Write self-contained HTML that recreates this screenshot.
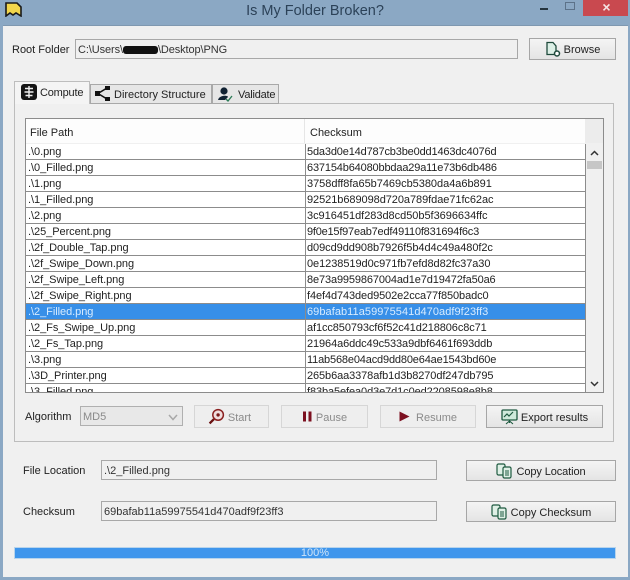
<!DOCTYPE html>
<html><head><meta charset="utf-8"><style>
html,body{margin:0;padding:0;width:630px;height:580px;overflow:hidden;background:#8ba8c4}
*{box-sizing:border-box}
body{font-family:"Liberation Sans",sans-serif;font-size:11px;color:#222;position:relative}
#w{position:absolute;left:0;top:0;width:630px;height:580px;filter:blur(0.3px)}
.a{position:absolute}
.t{position:absolute;white-space:nowrap;line-height:14px;transform:translateY(1px)}
.in{position:absolute;background:#f0f0f0;border:1px solid #a8a8a8;line-height:20px;padding-left:2px;white-space:nowrap;color:#333}
.btn{position:absolute;border:1px solid #a6a6a6;background:linear-gradient(#f4f4f4,#e4e4e4);text-align:center;white-space:nowrap;display:flex;align-items:center;justify-content:center;gap:3px;color:#222}
.btn span{position:relative;top:1px}
.dis{border-color:#d6d6d6;background:#eeeeee;color:#8a8a8a}
.row{position:absolute;left:26px;width:559px;height:16px;border-bottom:1px solid #8c8c8c;background:#fff;line-height:15px;white-space:nowrap;color:#222}
.row span{position:absolute;top:1px}
.row .p{left:2px;letter-spacing:-0.05px}
.row .c{left:281px}
.sel{background:#378fe8;color:#d8ecff}
svg{display:block;flex:none}
</style></head><body><div id="w">
<div class="a" style="left:3px;top:25px;width:625px;height:552px;background:#f0f0f0;border-top:1px solid #7f98b0"></div>

<svg class="a" style="left:5px;top:2px" width="17" height="15" viewBox="0 0 17 15"><path d="M1 1H12L16 5V14L11 11L8 13L5 11L1 14Z" fill="#f2d64b" stroke="#1a1a1a" stroke-width="1.6"/></svg>
<div class="t" style="left:0;width:630px;top:1px;text-align:center;font-size:14.5px;line-height:18px;color:#2c4258">Is My Folder Broken?</div>
<div class="a" style="left:540px;top:8px;width:8px;height:2px;background:#24343f"></div>
<div class="a" style="left:565px;top:2px;width:10px;height:8px;border:1px solid #5c7289"></div>
<div class="a" style="left:583px;top:0;width:45px;height:16px;background:#c9494f"></div>
<div class="t" style="left:584px;width:45px;top:-1px;text-align:center;font-size:14px;line-height:15px;color:#f5e4e4;font-weight:bold">×</div>

<div class="t" style="left:12px;top:42px">Root Folder</div>
<div class="in" style="left:75px;top:39px;width:443px;height:20px;letter-spacing:-0.1px">C:\Users\<span style="display:inline-block;width:35px;height:8px;background:#111;border-radius:3px;vertical-align:-1px"></span>\Desktop\PNG</div>
<div class="btn" style="left:529px;top:38px;width:87px;height:22px"><svg width="16" height="16" viewBox="0 0 16 16"><path d="M2 1.5H8L11 5V13.5H2Z" fill="#dcefe6" stroke="#1f4a3c" stroke-width="1.3"/><circle cx="12" cy="12.5" r="2.5" fill="#fff" stroke="#1f4a3c" stroke-width="1.5"/></svg><span>Browse</span></div>

<!-- tabs -->
<div class="a" style="left:14px;top:103px;width:600px;height:339px;border:1px solid #bdbdbd;background:#f0f0f0"></div>
<div class="a" style="left:90px;top:84px;width:122px;height:20px;border:1px solid #a8a8a8;background:#e6e6e6"></div>
<div class="a" style="left:212px;top:84px;width:67px;height:20px;border:1px solid #a8a8a8;background:#e6e6e6"></div>
<div class="a" style="left:14px;top:81px;width:76px;height:23px;border:1px solid #bdbdbd;border-bottom:0;background:#f4f4f4"></div>
<svg class="a" style="left:21px;top:84px" width="16" height="16" viewBox="0 0 16 16"><rect width="16" height="16" rx="3" fill="#141414"/><path d="M8 2V14M4 4.5H12M3.5 8H12.5M4.5 11.5H11.5" stroke="#eee" stroke-width="1.4"/></svg>
<div class="t" style="left:40px;top:85px;letter-spacing:-0.2px">Compute</div>
<svg class="a" style="left:94px;top:86px" width="17" height="15" viewBox="0 0 17 15"><path d="M4 7.5L13 2M4 7.5L13 13" stroke="#111" stroke-width="1.6"/><rect x="1" y="5" width="5" height="5" fill="#111"/><rect x="11" y="0" width="5" height="4" fill="#111"/><rect x="11" y="11" width="5" height="4" fill="#111"/></svg>
<div class="t" style="left:114px;top:87px">Directory Structure</div>
<svg class="a" style="left:217px;top:86px" width="17" height="16" viewBox="0 0 17 16"><circle cx="7" cy="5" r="3.6" fill="#123"/><path d="M1 14C2 9 11 9 11 11L8 14Z" fill="#123"/><path d="M9 13L11 15L15 10" fill="none" stroke="#2a7a55" stroke-width="1.3"/></svg>
<div class="t" style="left:238px;top:87px;letter-spacing:-0.2px">Validate</div>

<!-- table -->
<div class="a" style="left:25px;top:118px;width:579px;height:275px;border:1px solid #8c8c8c;background:#f0f0f0"></div>
<div class="a" style="left:26px;top:119px;width:559px;height:24px;background:#fdfdfd"></div>
<div class="a" style="left:585px;top:119px;width:18px;height:24px;background:#ececec"></div>
<div class="a" style="left:304px;top:119px;width:1px;height:24px;background:#e6e6e6"></div>
<div class="t" style="left:30px;top:125px">File Path</div>
<div class="t" style="left:310px;top:125px">Checksum</div>

<div class="row" style="top:144px"><span class="p">.\0.png</span><span class="c" style="letter-spacing:-0.16px">5da3d0e14d787cb3be0dd1463dc4076d</span></div>
<div class="row" style="top:160px"><span class="p">.\0_Filled.png</span><span class="c" style="letter-spacing:-0.16px">637154b64080bbdaa29a11e73b6db486</span></div>
<div class="row" style="top:176px"><span class="p">.\1.png</span><span class="c" style="letter-spacing:-0.03px">3758dff8fa65b7469cb5380da4a6b891</span></div>
<div class="row" style="top:192px"><span class="p">.\1_Filled.png</span><span class="c" style="letter-spacing:-0.06px">92521b689098d720a789fdae71fc62ac</span></div>
<div class="row" style="top:208px"><span class="p">.\2.png</span><span class="c" style="letter-spacing:-0.03px">3c916451df283d8cd50b5f3696634ffc</span></div>
<div class="row" style="top:224px"><span class="p">.\25_Percent.png</span><span class="c" style="letter-spacing:-0.22px">9f0e15f97eab7edf49110f831694f6c3</span></div>
<div class="row" style="top:240px"><span class="p">.\2f_Double_Tap.png</span><span class="c" style="letter-spacing:-0.06px">d09cd9dd908b7926f5b4d4c49a480f2c</span></div>
<div class="row" style="top:256px"><span class="p">.\2f_Swipe_Down.png</span><span class="c" style="letter-spacing:-0.06px">0e1238519d0c971fb7efd8d82fc37a30</span></div>
<div class="row" style="top:272px"><span class="p">.\2f_Swipe_Left.png</span><span class="c" style="letter-spacing:-0.13px">8e73a9959867004ad1e7d19472fa50a6</span></div>
<div class="row" style="top:288px"><span class="p">.\2f_Swipe_Right.png</span><span class="c" style="letter-spacing:-0.1px">f4ef4d743ded9502e2cca77f850badc0</span></div>
<div class="row sel" style="top:304px"><span class="p">.\2_Filled.png</span><span class="c" style="letter-spacing:0.06px">69bafab11a59975541d470adf9f23ff3</span></div>
<div class="row" style="top:320px"><span class="p">.\2_Fs_Swipe_Up.png</span><span class="c" style="letter-spacing:-0.1px">af1cc850793cf6f52c41d218806c8c71</span></div>
<div class="row" style="top:336px"><span class="p">.\2_Fs_Tap.png</span><span class="c" style="letter-spacing:-0.1px">21964a6ddc49c533a9dbf6461f693ddb</span></div>
<div class="row" style="top:352px"><span class="p">.\3.png</span><span class="c" style="letter-spacing:-0.16px">11ab568e04acd9dd80e64ae1543bd60e</span></div>
<div class="row" style="top:368px"><span class="p">.\3D_Printer.png</span><span class="c" style="letter-spacing:-0.1px">265b6aa3378afb1d3b8270df247db795</span></div>
<div class="row" style="top:384px;height:8px;overflow:hidden;border-bottom:0"><span class="p">.\3_Filled.png</span><span class="c" style="letter-spacing:-0.1px">f83ba5efea0d3e7d1c0ed2208598e8b8</span></div>
<div class="a" style="left:305px;top:144px;width:1px;height:248px;background:#8c8c8c"></div>
<div class="a" style="left:585px;top:144px;width:1px;height:248px;background:#8c8c8c"></div>
<div class="a" style="left:586px;top:144px;width:17px;height:248px;background:#f0f0f0"></div>
<div class="a" style="left:587px;top:161px;width:15px;height:8px;background:#c6c6c6"></div>
<svg class="a" style="left:590px;top:150px" width="9" height="6" viewBox="0 0 9 6"><path d="M1 5L4.5 1.5L8 5" fill="none" stroke="#333" stroke-width="1.5"/></svg>
<svg class="a" style="left:590px;top:381px" width="9" height="6" viewBox="0 0 9 6"><path d="M1 1L4.5 4.5L8 1" fill="none" stroke="#333" stroke-width="1.5"/></svg>

<!-- controls -->
<div class="t" style="left:25px;top:409px">Algorithm</div>
<div class="a" style="left:80px;top:406px;width:103px;height:20px;border:1px solid #b0b0b0;background:#e8e8e8;color:#8a8a8a;line-height:20px;padding-left:2px">MD5</div>
<svg class="a" style="left:168px;top:414px" width="10" height="7" viewBox="0 0 10 7"><path d="M1 1L5 5.5L9 1" fill="none" stroke="#a8a8a8" stroke-width="1.5"/></svg>
<div class="btn dis" style="left:194px;top:405px;width:75px;height:23px;padding-right:4px"><svg width="17" height="17" viewBox="0 0 16 16"><circle cx="9.5" cy="6.5" r="5" fill="#f0dede" stroke="#8a2020" stroke-width="1.4"/><circle cx="9.5" cy="6.5" r="1.6" fill="#7a1818"/><path d="M5.5 10.5L1.5 14.5" stroke="#6a1010" stroke-width="2.2"/></svg><span>Start</span></div>
<div class="btn dis" style="left:281px;top:405px;width:87px;height:23px"><svg width="11" height="11" viewBox="0 0 11 11"><rect x="1" y="0.5" width="3" height="10" fill="#7c1020"/><rect x="6.5" y="0.5" width="3" height="10" fill="#7c1020"/></svg><span>Pause</span></div>
<div class="btn dis" style="left:380px;top:405px;width:96px;height:23px;gap:6px"><svg width="11" height="11" viewBox="0 0 11 11"><path d="M0.5 0.5L10.5 5.5L0.5 10.5Z" fill="#7c1020"/></svg><span>Resume</span></div>
<div class="btn" style="left:486px;top:405px;width:117px;height:23px"><svg width="17" height="17" viewBox="0 0 17 17"><rect x="1" y="2" width="15" height="10" rx="1" fill="#cfeadb" stroke="#1e5a40" stroke-width="1.3"/><path d="M3 9L6 6L8 8L12 4" fill="none" stroke="#1e5a40" stroke-width="1.2"/><path d="M8.5 12V15M5 16L8.5 13L12 16" fill="none" stroke="#1e5a40" stroke-width="1.1"/></svg><span>Export results</span></div>

<div class="t" style="left:23px;top:463px">File Location</div>
<div class="in" style="left:101px;top:460px;width:336px;height:20px">.\2_Filled.png</div>
<div class="btn" style="left:466px;top:460px;width:150px;height:21px"><svg width="17" height="16" viewBox="0 0 17 16"><rect x="1" y="1" width="8" height="11" rx="1.5" fill="#dff0e6" stroke="#1e5a40" stroke-width="1.2"/><rect x="7" y="4" width="8" height="11" rx="1.5" fill="#dff0e6" stroke="#1e5a40" stroke-width="1.2"/><path d="M9 8H13M9 10H13M9 12H13" stroke="#1e5a40"/></svg><span style="letter-spacing:-0.1px">Copy Location</span></div>

<div class="t" style="left:23px;top:504px">Checksum</div>
<div class="in" style="left:101px;top:501px;width:336px;height:20px">69bafab11a59975541d470adf9f23ff3</div>
<div class="btn" style="left:466px;top:501px;width:150px;height:21px"><svg width="17" height="16" viewBox="0 0 17 16"><rect x="1" y="1" width="8" height="11" rx="1.5" fill="#dff0e6" stroke="#1e5a40" stroke-width="1.2"/><rect x="7" y="4" width="8" height="11" rx="1.5" fill="#dff0e6" stroke="#1e5a40" stroke-width="1.2"/><path d="M9 8H13M9 10H13M9 12H13" stroke="#1e5a40"/></svg><span>Copy Checksum</span></div>

<div class="a" style="left:14px;top:547px;width:602px;height:12px;background:#3f96ec;border:1px solid #b8d4ec;text-align:center;line-height:10px;color:#cfe4f8;font-size:11px">100%</div>
</div></body></html>
